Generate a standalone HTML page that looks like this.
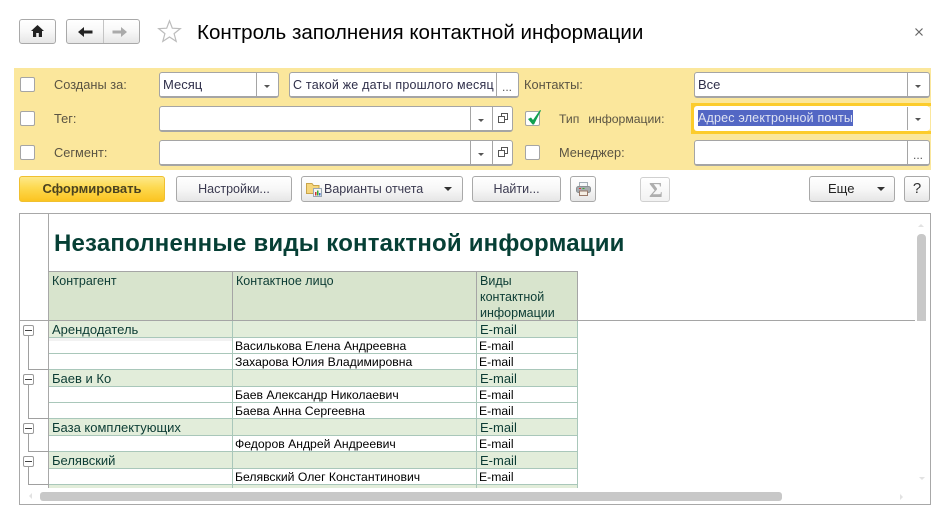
<!DOCTYPE html>
<html lang="ru"><head><meta charset="utf-8"><title>Контроль заполнения контактной информации</title>
<style>
html,body{margin:0;padding:0;background:#fff}
#p{position:relative;width:940px;height:519px;overflow:hidden;background:#fff;font-family:"Liberation Sans","Noto Sans CJK SC",sans-serif;font-size:12px;color:#000}
#p div,#p span.a,#p svg{position:absolute}
.t{white-space:nowrap;line-height:16px;height:16px}
.btn{box-sizing:border-box;border:1px solid #a9a9a9;border-radius:3px;background:linear-gradient(#fff,#f7f7f7 50%,#e6e6e6);height:26px;top:176px;text-align:center;line-height:24px;color:#3b3a50;white-space:nowrap;font-size:12.5px}
.f{box-sizing:border-box;border:1px solid #a5a5a5;border-bottom:2px solid #a5a5a5;border-radius:3px;background:#fff;height:26px}
.v{top:0;bottom:0;width:1px;background:#a5a5a5}
.dd{width:0;height:0;border-left:3px solid transparent;border-right:3px solid transparent;border-top:3px solid #555}
.cb{box-sizing:border-box;width:15px;height:15px;border:1px solid #a5a5a5;border-radius:2px;background:#fff;left:20px}
.l{color:#5a5443;font-size:12.8px}
.h{height:1px;background:#a9c7ba;left:49px;width:529px}
.g{background:#e2edda;left:49px;width:528px}
.c{color:#0c3c34;font-size:13px}
.k{color:#0c3c34;font-size:12.5px}
.d{color:#000;font-size:12.2px}
.m{box-sizing:border-box;left:23px;width:11px;height:11px;border:1px solid #9a9a9a;border-radius:2px;background:#fff}
.m:after{content:"";position:absolute;left:1px;right:1px;top:4px;height:1px;background:#444}
.tv{left:28px;width:1px;background:#a0a0a0}
.th{left:28px;width:21px;height:1px;background:#a0a0a0}
</style></head><body>
<div id="p">

<div class="btn" style="left:19px;top:19px;width:37px;height:25px"></div>
<svg style="left:31px;top:25px" width="13" height="12" viewBox="0 0 13 12"><path d="M6.500 0L0 6H2V12H5.200V8H7.800V12H11V6H13Z" fill="#222"/></svg>
<div class="btn" style="left:66px;top:19px;width:74px;height:25px"></div>
<div style="left:103px;top:20px;width:1px;height:23px;background:#c4c4c4"></div>
<svg style="left:78px;top:26px" width="15" height="12" viewBox="0 0 15 12"><path d="M0 6L6 1V4.500H14.500V7.500H6V11Z" fill="#222"/></svg>
<svg style="left:112px;top:26px" width="15" height="12" viewBox="0 0 15 12"><path d="M15 6L9 1V4.500H0.500V7.500H9V11Z" fill="#aaa"/></svg>
<svg style="left:157px;top:19px" width="25" height="25" viewBox="0 0 25 25"><path d="M12.500 1.800L15.300 9.200L23.300 9.600L17.100 14.600L19.200 22.400L12.500 18L5.800 22.400L7.900 14.600L1.700 9.600L9.700 9.200Z" fill="#fff" stroke="#bcbcbc" stroke-width="1.200"/></svg>
<div class="t" style="left:197px;top:21px;font-size:20.55px;line-height:23px;height:23px;color:#000">Контроль заполнения контактной информации</div>
<svg style="left:915px;top:28px" width="8" height="8" viewBox="0 0 8 8"><path d="M.5 .5L7.500 7.500M7.500 .5L.5 7.500" stroke="#666" stroke-width="1.200"/></svg>

<div style="left:14px;top:68px;width:917px;height:102px;background:#fbe79c"></div>

<div class="cb" style="top:77px"></div>
<div class="cb" style="top:111px"></div>
<div class="cb" style="top:145px"></div>
<div class="t l" style="left:54px;top:77px">Созданы за:</div>
<div class="t l" style="left:54px;top:111px">Тег:</div>
<div class="t l" style="left:54px;top:145px">Сегмент:</div>

<div class="f" style="left:159px;top:72px;width:120px"><div class="v" style="left:96px"></div><div class="dd" style="left:104px;top:12px"></div><div class="t" style="left:3px;top:4px;color:#2f2f4a;font-size:13px">Месяц</div></div>
<div class="f" style="left:289px;top:72px;width:230px"><div class="v" style="left:206px"></div><div class="t" style="left:3px;top:4px;color:#2f2f4a;font-size:12.5px;letter-spacing:.21px">С такой же даты прошлого месяц</div><div class="t" style="left:212px;top:6px;color:#555">...</div></div>
<div class="t l" style="left:524px;top:77px">Контакты:</div>

<div class="f" style="left:159px;top:106px;width:354px"><div class="v" style="left:310px"></div><div class="v" style="left:332px"></div><div class="dd" style="left:318px;top:12px"></div>
<svg style="left:338px;top:6px" width="10" height="10" viewBox="0 0 10 10"><path d="M3.500 3.500V.5H9.500V6.500H6.500M.5 3.500H6.500V9.500H.5Z" fill="none" stroke="#555"/></svg></div>
<div class="f" style="left:159px;top:140px;width:354px"><div class="v" style="left:310px"></div><div class="v" style="left:332px"></div><div class="dd" style="left:318px;top:12px"></div>
<svg style="left:338px;top:6px" width="10" height="10" viewBox="0 0 10 10"><path d="M3.500 3.500V.5H9.500V6.500H6.500M.5 3.500H6.500V9.500H.5Z" fill="none" stroke="#555"/></svg></div>

<div class="cb" style="left:525px;top:111px"></div>
<svg style="left:526px;top:109px" width="16" height="16" viewBox="0 0 16 16"><path d="M2 10L5 8.500L7 11L14 1L15 1.500L8 15.500H6.500Z" fill="#12a050"/></svg>
<div class="cb" style="left:525px;top:145px"></div>
<div class="t l" style="left:559px;top:111px;font-size:12.2px;word-spacing:5.500px">Тип информации:</div>
<div class="t l" style="left:559px;top:145px">Менеджер:</div>

<div class="f" style="left:694px;top:72px;width:236px"><div class="v" style="left:212px"></div><div class="dd" style="left:220px;top:12px"></div><div class="t" style="left:3px;top:4px;color:#2f2f4a;font-size:13px">Все</div></div>
<div style="left:691px;top:103px;width:240px;height:31px;background:#fccc2c"></div>
<div style="left:929px;top:106px;width:2px;height:25px;background:#fbe79c"></div>
<div style="left:694px;top:106px;width:236px;height:25px;background:#fff;border-radius:3px"></div>
<div style="left:907px;top:107px;width:1px;height:23px;background:#a5a5a5"></div>
<div class="dd" style="left:915px;top:118px"></div>
<div class="t" style="left:698px;top:110px;width:155px;height:16px;background:#5367c4;color:#dfe3f2;font-size:12.5px;letter-spacing:.19px">Адрес электронной почты</div>
<div class="f" style="left:694px;top:140px;width:236px"><div class="v" style="left:212px"></div><div class="t" style="left:218px;top:6px;color:#555">...</div></div>

<div class="btn" style="left:19px;width:146px;border-color:#f0c030;background:linear-gradient(#fde98a,#fdd94f 45%,#fbc421);color:#4a4220;font-weight:bold;font-size:13px">Сформировать</div>
<div class="btn" style="left:176px;width:116px">Настройки...</div>
<div class="btn" style="left:301px;width:162px;text-align:left;padding-left:22px">Варианты отчета</div>
<svg style="left:306px;top:181px" width="16" height="16" viewBox="0 0 16 16"><path d="M.5 2.500H6L7.500 4.500H13V12.500H.5Z" fill="#f6d67c" stroke="#c9a44a"/><rect x="7.500" y="7.500" width="8" height="8" fill="#f4f4f4" stroke="#9aa7b5"/><rect x="9" y="11" width="1.500" height="3.500" fill="#c33"/><rect x="11" y="9.500" width="1.500" height="5" fill="#3a3"/><rect x="13" y="12" width="1.500" height="2.500" fill="#36c"/></svg>
<div class="dd" style="left:444px;top:187px;border-left-width:4px;border-right-width:4px;border-top-width:4px;border-top-color:#333"></div>
<div class="btn" style="left:472px;width:89px">Найти...</div>
<div class="btn" style="left:570px;width:26px"></div>
<svg style="left:576px;top:182px" width="15" height="14" viewBox="0 0 15 14"><rect x="3.500" y=".5" width="8" height="5" fill="#f4f6f8" stroke="#a3adb5"/><rect x=".5" y="4.500" width="14" height="6" rx="2" fill="#a6abae" stroke="#8a8f92"/><rect x="3" y="6" width="2" height="1" fill="#d33"/><rect x="6.500" y="6" width="2" height="1" fill="#3a3"/><rect x="3.500" y="9" width="8" height="4.500" fill="#f5efe5" stroke="#9a7a6a"/></svg>
<div class="btn" style="left:640px;top:177px;width:30px;height:25px;border-color:#d0d0d0;background:linear-gradient(#fff,#f2f2f2)"></div>
<div class="t" style="left:649px;top:178px;height:24px;font:bold 21px/24px 'Liberation Serif',serif;color:#aeaeae">Σ</div>
<div class="btn" style="left:809px;width:86px;text-align:left;padding-left:18px;color:#222;font-size:13px">Еще</div>
<div class="dd" style="left:877px;top:187px;border-left-width:4px;border-right-width:4px;border-top-width:4px;border-top-color:#333"></div>
<div class="btn" style="left:904px;width:26px;color:#333;font-size:15px;line-height:24px">?</div>

<div style="box-sizing:border-box;left:19px;top:213px;width:912px;height:292px;border:1px solid #a8a8a8"></div>
<div style="left:48px;top:214px;width:1px;height:107px;background:#a8a8a8"></div>
<div class="t" style="left:54px;top:230px;height:28px;line-height:28px;font-size:24px;font-weight:bold;color:#063f35;letter-spacing:.19px">Незаполненные виды контактной информации</div>

<div style="left:49px;top:272px;width:528px;height:48px;background:#d8e4cd"></div>
<div style="left:48px;top:271px;width:530px;height:1px;background:#a5a5a5"></div>
<div style="left:20px;top:320px;width:895px;height:1px;background:#a5a5a5"></div>
<div class="t k" style="left:52px;top:273px">Контрагент</div>
<div class="t k" style="left:236px;top:273px">Контактное лицо</div>
<div class="t k" style="left:480px;top:273px">Виды</div>
<div class="t k" style="left:480px;top:289px">контактной</div>
<div class="t k" style="left:480px;top:305px">информации</div>

<div class="g" style="top:321px;height:16px"></div>
<div class="g" style="top:370px;height:16px"></div>
<div class="g" style="top:419px;height:16px"></div>
<div class="g" style="top:452px;height:16px"></div>
<div class="g" style="top:485px;height:3px"></div>
<div style="left:49px;top:338px;width:183px;height:3px;background:#f2f2f2"></div>
<div class="h" style="top:337px"></div><div class="h" style="top:353px"></div><div class="h" style="top:369px"></div><div class="h" style="top:386px"></div><div class="h" style="top:402px"></div><div class="h" style="top:418px"></div><div class="h" style="top:435px"></div><div class="h" style="top:451px"></div><div class="h" style="top:468px"></div><div class="h" style="top:484px"></div>
<div style="left:48px;top:321px;width:1px;height:167px;background:#a8a8a8"></div>
<div style="left:232px;top:272px;width:1px;height:48px;background:#a5a5a5"></div>
<div style="left:476px;top:272px;width:1px;height:48px;background:#a5a5a5"></div>
<div style="left:577px;top:272px;width:1px;height:48px;background:#a5a5a5"></div>
<div style="left:232px;top:321px;width:1px;height:167px;background:#a9c7ba"></div>
<div style="left:476px;top:321px;width:1px;height:167px;background:#a9c7ba"></div>
<div style="left:577px;top:321px;width:1px;height:167px;background:#a9c7ba"></div>

<div class="t c" style="left:52px;top:322px">Арендодатель</div>
<div class="t d" style="left:235px;top:338px">Василькова Елена Андреевна</div>
<div class="t d" style="left:235px;top:354px">Захарова Юлия Владимировна</div>
<div class="t c" style="left:52px;top:371px">Баев и Ко</div>
<div class="t d" style="left:235px;top:387px">Баев Александр Николаевич</div>
<div class="t d" style="left:235px;top:403px">Баева Анна Сергеевна</div>
<div class="t c" style="left:52px;top:420px">База комплектующих</div>
<div class="t d" style="left:235px;top:436px">Федоров Андрей Андреевич</div>
<div class="t c" style="left:52px;top:453px">Белявский</div>
<div class="t d" style="left:235px;top:469px">Белявский Олег Константинович</div>

<div class="t c" style="left:480px;top:322px">E-mail</div>
<div class="t d" style="left:479px;top:338px">E-mail</div>
<div class="t d" style="left:479px;top:354px">E-mail</div>
<div class="t c" style="left:480px;top:371px">E-mail</div>
<div class="t d" style="left:479px;top:387px">E-mail</div>
<div class="t d" style="left:479px;top:403px">E-mail</div>
<div class="t c" style="left:480px;top:420px">E-mail</div>
<div class="t d" style="left:479px;top:436px">E-mail</div>
<div class="t c" style="left:480px;top:453px">E-mail</div>
<div class="t d" style="left:479px;top:469px">E-mail</div>

<div class="tv" style="top:335px;height:34px"></div><div class="th" style="top:369px"></div>
<div class="tv" style="top:384px;height:34px"></div><div class="th" style="top:418px"></div>
<div class="tv" style="top:433px;height:18px"></div><div class="th" style="top:451px"></div>
<div class="tv" style="top:466px;height:18px"></div><div class="th" style="top:484px"></div>
<div class="m" style="top:325px"></div>
<div class="m" style="top:374px"></div>
<div class="m" style="top:423px"></div>
<div class="m" style="top:456px"></div>

<div style="left:917px;top:234px;width:9px;height:87px;background:#c8c8c8;border-radius:4px 4px 0 0"></div>
<div style="left:40px;top:492px;width:742px;height:9px;background:#c8c8c8;border-radius:3px"></div>
<div style="left:918px;top:224px;width:0;height:0;border-left:3px solid transparent;border-right:3px solid transparent;border-bottom:3px solid #e2e2e2"></div>
<div style="left:919px;top:477px;width:0;height:0;border-left:3px solid transparent;border-right:3px solid transparent;border-top:3px solid #e2e2e2"></div>
<div style="left:29px;top:493px;width:0;height:0;border-top:3px solid transparent;border-bottom:3px solid transparent;border-right:3px solid #e2e2e2"></div>
<div style="left:900px;top:494px;width:0;height:0;border-top:3px solid transparent;border-bottom:3px solid transparent;border-left:3px solid #e2e2e2"></div>
</div>
</body></html>
